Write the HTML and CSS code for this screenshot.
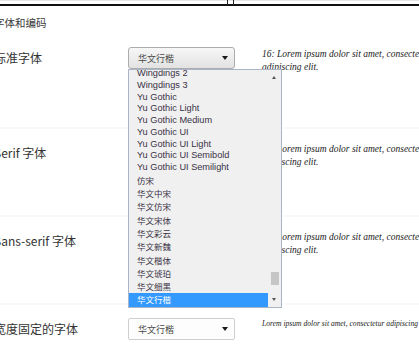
FILE: index.html
```html
<!DOCTYPE html>
<html lang="zh-CN">
<head>
<meta charset="utf-8">
<title>字体和编码</title>
<link rel="stylesheet" href="styles.css">
</head>
<body>
<div class="page">
  <div class="topbar"><span class="tick"></span></div>
  <h2 class="section-title">字体和编码</h2>
  <div class="rows">
    <div class="row row-first">
      <div class="label">标准字体</div>
      <div class="select-wrap">
        <div class="select select-open"><span class="select-text">华文行楷</span><span class="caret"></span></div>
        <div class="dropdown">
          <ul class="options">
            <li class="opt latin">Wingdings 2</li>
            <li class="opt latin">Wingdings 3</li>
            <li class="opt latin">Yu Gothic</li>
            <li class="opt latin">Yu Gothic Light</li>
            <li class="opt latin">Yu Gothic Medium</li>
            <li class="opt latin">Yu Gothic UI</li>
            <li class="opt latin">Yu Gothic UI Light</li>
            <li class="opt latin">Yu Gothic UI Semibold</li>
            <li class="opt latin">Yu Gothic UI Semilight</li>
            <li class="opt cjk">仿宋</li>
            <li class="opt cjk">华文中宋</li>
            <li class="opt cjk">华文仿宋</li>
            <li class="opt cjk">华文宋体</li>
            <li class="opt cjk">华文彩云</li>
            <li class="opt cjk">华文新魏</li>
            <li class="opt cjk">华文楷体</li>
            <li class="opt cjk">华文琥珀</li>
            <li class="opt cjk">华文细黑</li>
            <li class="opt cjk selected">华文行楷</li>
          </ul>
          <div class="scrollbar">
            <span class="arrow-up"></span>
            <span class="thumb"></span>
            <span class="arrow-down"></span>
          </div>
        </div>
      </div>
      <div class="preview">16: Lorem ipsum dolor sit amet, consectetur<br>adipiscing elit.</div>
    </div>
    <div class="row">
      <div class="label">Serif 字体</div>
      <div class="select-wrap">
        <div class="select"><span class="select-text">宋体</span><span class="caret"></span></div>
      </div>
      <div class="preview">16: Lorem ipsum dolor sit amet, consectetur<br>adipiscing elit.</div>
    </div>
    <div class="row">
      <div class="label">Sans-serif 字体</div>
      <div class="select-wrap">
        <div class="select"><span class="select-text">微软雅黑</span><span class="caret"></span></div>
      </div>
      <div class="preview">16: Lorem ipsum dolor sit amet, consectetur<br>adipiscing elit.</div>
    </div>
    <div class="row">
      <div class="label">宽度固定的字体</div>
      <div class="select-wrap">
        <div class="select select-flat"><span class="select-text">华文行楷</span><span class="caret"></span></div>
      </div>
      <div class="preview preview-small">Lorem ipsum dolor sit amet, consectetur adipiscing elit.</div>
    </div>
  </div>
</div>
</body>
</html>
```
FILE: styles.css
```css
html, body {
  margin: 0;
  padding: 0;
  background: #ffffff;
}
body {
  width: 419px;
  height: 364px;
  overflow: hidden;
  font-family: "Noto Sans CJK SC", "Noto Sans", sans-serif;
  color: #333333;
}
.page {
  margin-left: -6px;
  width: 440px;
  height: 364px;
  overflow: hidden;
}
.topbar {
  position: relative;
  box-sizing: border-box;
  height: 6px;
  border-top: 1px solid #e6e6e6;
  border-bottom: 2px solid #111111;
}
.tick {
  position: absolute;
  left: 233px;
  top: -1px;
  width: 5px;
  height: 5px;
  border-left: 1px solid #222;
  border-right: 1px solid #222;
}
.section-title {
  margin: 10px 0 0 0;
  font-size: 10.5px;
  line-height: 14px;
  font-weight: normal;
  color: #3a3a3a;
}
.row {
  display: flex;
  align-items: flex-start;
  box-sizing: border-box;
  height: 88px;
  padding-top: 13px;
  border-top: 2px solid #f8f8f8;
}
.row-first {
  height: 97px;
  padding-top: 17px;
  border-top: none;
}
.label {
  width: 134px;
  flex: none;
  font-size: 12px;
  line-height: 22px;
  color: #333333;
  white-space: nowrap;
}
.select-wrap {
  position: relative;
  flex: none;
  width: 107px;
}
.select {
  box-sizing: border-box;
  height: 22px;
  display: flex;
  align-items: center;
  justify-content: space-between;
  padding: 0 6px 0 9px;
  border: 1px solid #acacac;
  border-radius: 3px;
  background: linear-gradient(#f7f7f7, #e2e2e2);
}
.select-flat {
  background: #fdfdfd;
  border-color: #cfcfcf;
  border-radius: 2px;
}
.select-text {
  font-size: 9px;
  color: #4a4a4a;
}
.caret {
  width: 0;
  height: 0;
  border-left: 3.5px solid transparent;
  border-right: 3.5px solid transparent;
  border-top: 4px solid #1a1a1a;
}
.dropdown {
  position: absolute;
  left: 0;
  top: 22px;
  z-index: 5;
  box-sizing: border-box;
  width: 154px;
  height: 239px;
  border: 1px solid #aab6c8;
  background: #f0f0f0;
  display: flex;
  overflow: hidden;
}
.options {
  list-style: none;
  margin: -2px 0 0 0;
  padding: 0;
  flex: 1;
}
.opt {
  padding-left: 8px;
  color: #3a3246;
  white-space: nowrap;
}
.latin {
  height: 11.75px;
  line-height: 11.75px;
  font-family: "Liberation Sans", Arial, sans-serif;
  font-size: 9.2px;
}
.cjk {
  height: 13.3px;
  line-height: 13.3px;
  font-size: 8.5px;
}
.selected {
  background: #3399ff;
  color: #ffffff;
}
.scrollbar {
  position: relative;
  flex: none;
  width: 13px;
  background: #f0f0f0;
}
.arrow-up {
  position: absolute;
  left: 4px;
  top: 6px;
  width: 0;
  height: 0;
  border-left: 2.5px solid transparent;
  border-right: 2.5px solid transparent;
  border-bottom: 3px solid #555;
}
.arrow-down {
  position: absolute;
  left: 4px;
  bottom: 6px;
  width: 0;
  height: 0;
  border-left: 2.5px solid transparent;
  border-right: 2.5px solid transparent;
  border-top: 3px solid #555;
}
.thumb {
  position: absolute;
  left: 3px;
  top: 202px;
  width: 8px;
  height: 13px;
  background: #c6c6c6;
}
.preview {
  margin-left: 27px;
  flex: none;
  white-space: nowrap;
  font-family: "Liberation Serif", "DejaVu Serif", serif;
  font-style: italic;
  font-size: 9.5px;
  line-height: 13px;
  color: #222222;
  padding-top: 1px;
}
.preview-small {
  font-size: 7.6px;
  line-height: 10px;
  padding-top: 1px;
}
```
